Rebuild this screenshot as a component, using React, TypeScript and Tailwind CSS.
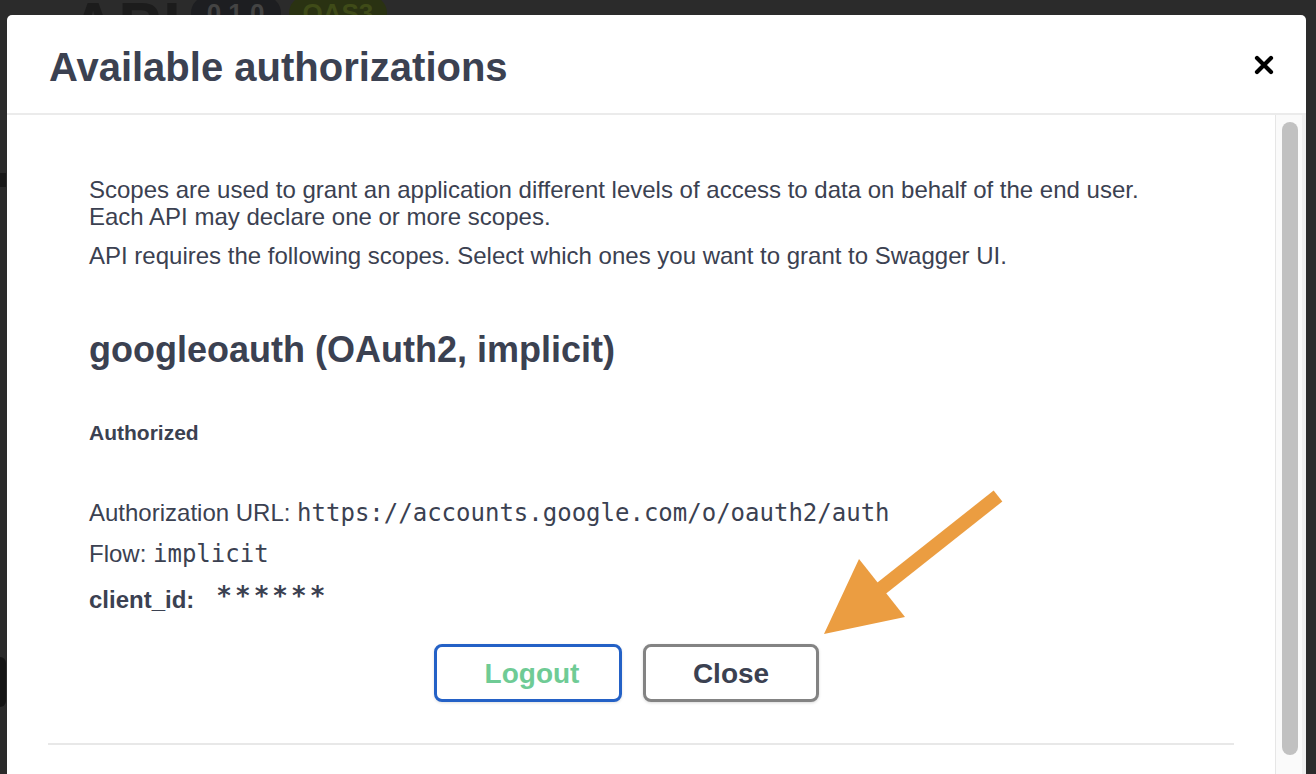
import React from "react";

export default function App() {
  const sans = { fontFamily: '"Liberation Sans", Arial, Helvetica, sans-serif' };
  const mono = { fontFamily: '"DejaVu Sans Mono", monospace' };
  return (
    <div
      className="relative w-[1316px] h-[774px] overflow-hidden bg-[#2b2b2b]"
      style={sans}
    >
      {/* dimmed page behind overlay */}
      <div className="flex items-start pl-[70px] -mt-[6px] gap-[8px]">
        <span className="text-[64px] leading-none font-bold text-[#1c1c1c] tracking-[2px]">API</span>
        <span className="mt-[2px] rounded-full bg-[#1d1e21] px-[16px] text-[26px] leading-[34px] font-bold text-[#444444]">
          0.1.0
        </span>
        <span className="mt-[2px] rounded-full bg-[#2a3212] px-[14px] text-[26px] leading-[34px] font-bold text-[#3f4b18]">
          OAS3
        </span>
      </div>
      <div className="mt-[115px] ml-0 w-[6px] h-[14px] bg-[#1a1a1a]" />
      <div className="mt-[470px] ml-0 w-[6px] h-[50px] rounded-r-full bg-[#151515]" />

      {/* modal */}
      <div className="absolute left-[7px] top-[15px] w-[1299px] h-[800px] bg-white rounded-t-[5px] flex flex-col">
        <div className="h-[100px] shrink-0 flex items-center justify-between pl-[42px] pr-[32px] border-b-2 border-[#ebebeb]">
          <h3 className="mt-[6px] text-[40px] font-bold text-[#3b4151] leading-none">Available authorizations</h3>
          <svg width="20" height="20" viewBox="0 0 20 20" className="block mt-[1px]">
            <path d="M3 3 L17 17 M17 3 L3 17" stroke="#000" strokeWidth="4.2" strokeLinecap="round" />
          </svg>
        </div>

        <div className="flex flex-1">
          <div className="flex-1 px-[41px]">
            <div className="pl-[41px] pt-[61px] text-[#3b4151]">
              <p className="text-[24px] leading-[27px]">
                Scopes are used to grant an application different levels of access to data on behalf of the end user.
                <br />
                Each API may declare one or more scopes.
              </p>
              <p className="mt-[12px] text-[24px] leading-[27px]">
                API requires the following scopes. Select which ones you want to grant to Swagger UI.
              </p>
              <h4 className="mt-[60px] text-[36px] leading-[41px] font-bold">googleoauth (OAuth2, implicit)</h4>
              <h6 className="mt-[51px] text-[21px] leading-[24px] font-bold">Authorized</h6>
              <p className="mt-[54px] text-[24px] leading-[28px]">
                Authorization URL:{" "}
                <code style={mono} className="text-[24px]">
                  https://accounts.google.com/o/oauth2/auth
                </code>
              </p>
              <p className="mt-[13px] text-[24px] leading-[28px]">
                Flow:{" "}
                <code style={mono} className="text-[24px]">
                  implicit
                </code>
              </p>
              <div className="mt-[18px] flex items-start h-[28px]">
                <span className="text-[24px] leading-[28px] font-bold">client_id:</span>
                <code
                  style={mono}
                  className="ml-[22px] -mt-[4px] text-[26px] leading-[28px] font-bold tracking-[3px] text-[#3b4151]"
                >
                  ******
                </code>
              </div>
            </div>
            <div className="mt-[30px] flex justify-center gap-[21px] pr-[29px]">
              <button className="w-[188px] h-[58px] rounded-[8px] border-[3px] border-[#2461c6] bg-white pt-[2px] pl-[8px] text-[28px] font-bold text-[#6fcb95] shadow-[0_1px_3px_rgba(0,0,0,0.12)]">
                Logout
              </button>
              <button className="w-[176px] h-[58px] rounded-[8px] border-[3px] border-[#838383] bg-white pt-[2px] text-[28px] font-bold text-[#3b4151] shadow-[0_1px_3px_rgba(0,0,0,0.15)]">
                Close
              </button>
            </div>
            <div className="mt-[41px] h-[2px] bg-[#e8e8e8]" />
          </div>

          <div className="w-[31px] shrink-0 flex">
            <div className="w-[27px] border-l border-[#e6e6e6] bg-[#fafafa] pl-[6px] pt-[7px]">
              <div className="w-[16px] h-[633px] rounded-full bg-[#c1c1c1]" />
            </div>
            <div className="w-[4px] bg-[#f0f0f0]" />
          </div>
        </div>
      </div>

      {/* orange arrow annotation */}
      <svg className="absolute inset-0 pointer-events-none" width="1316" height="774">
        <line x1="998" y1="496" x2="878" y2="591" stroke="#eb9d41" strokeWidth="14" />
        <polygon points="859,559 824,634 905,617" fill="#eb9d41" />
      </svg>
    </div>
  );
}
